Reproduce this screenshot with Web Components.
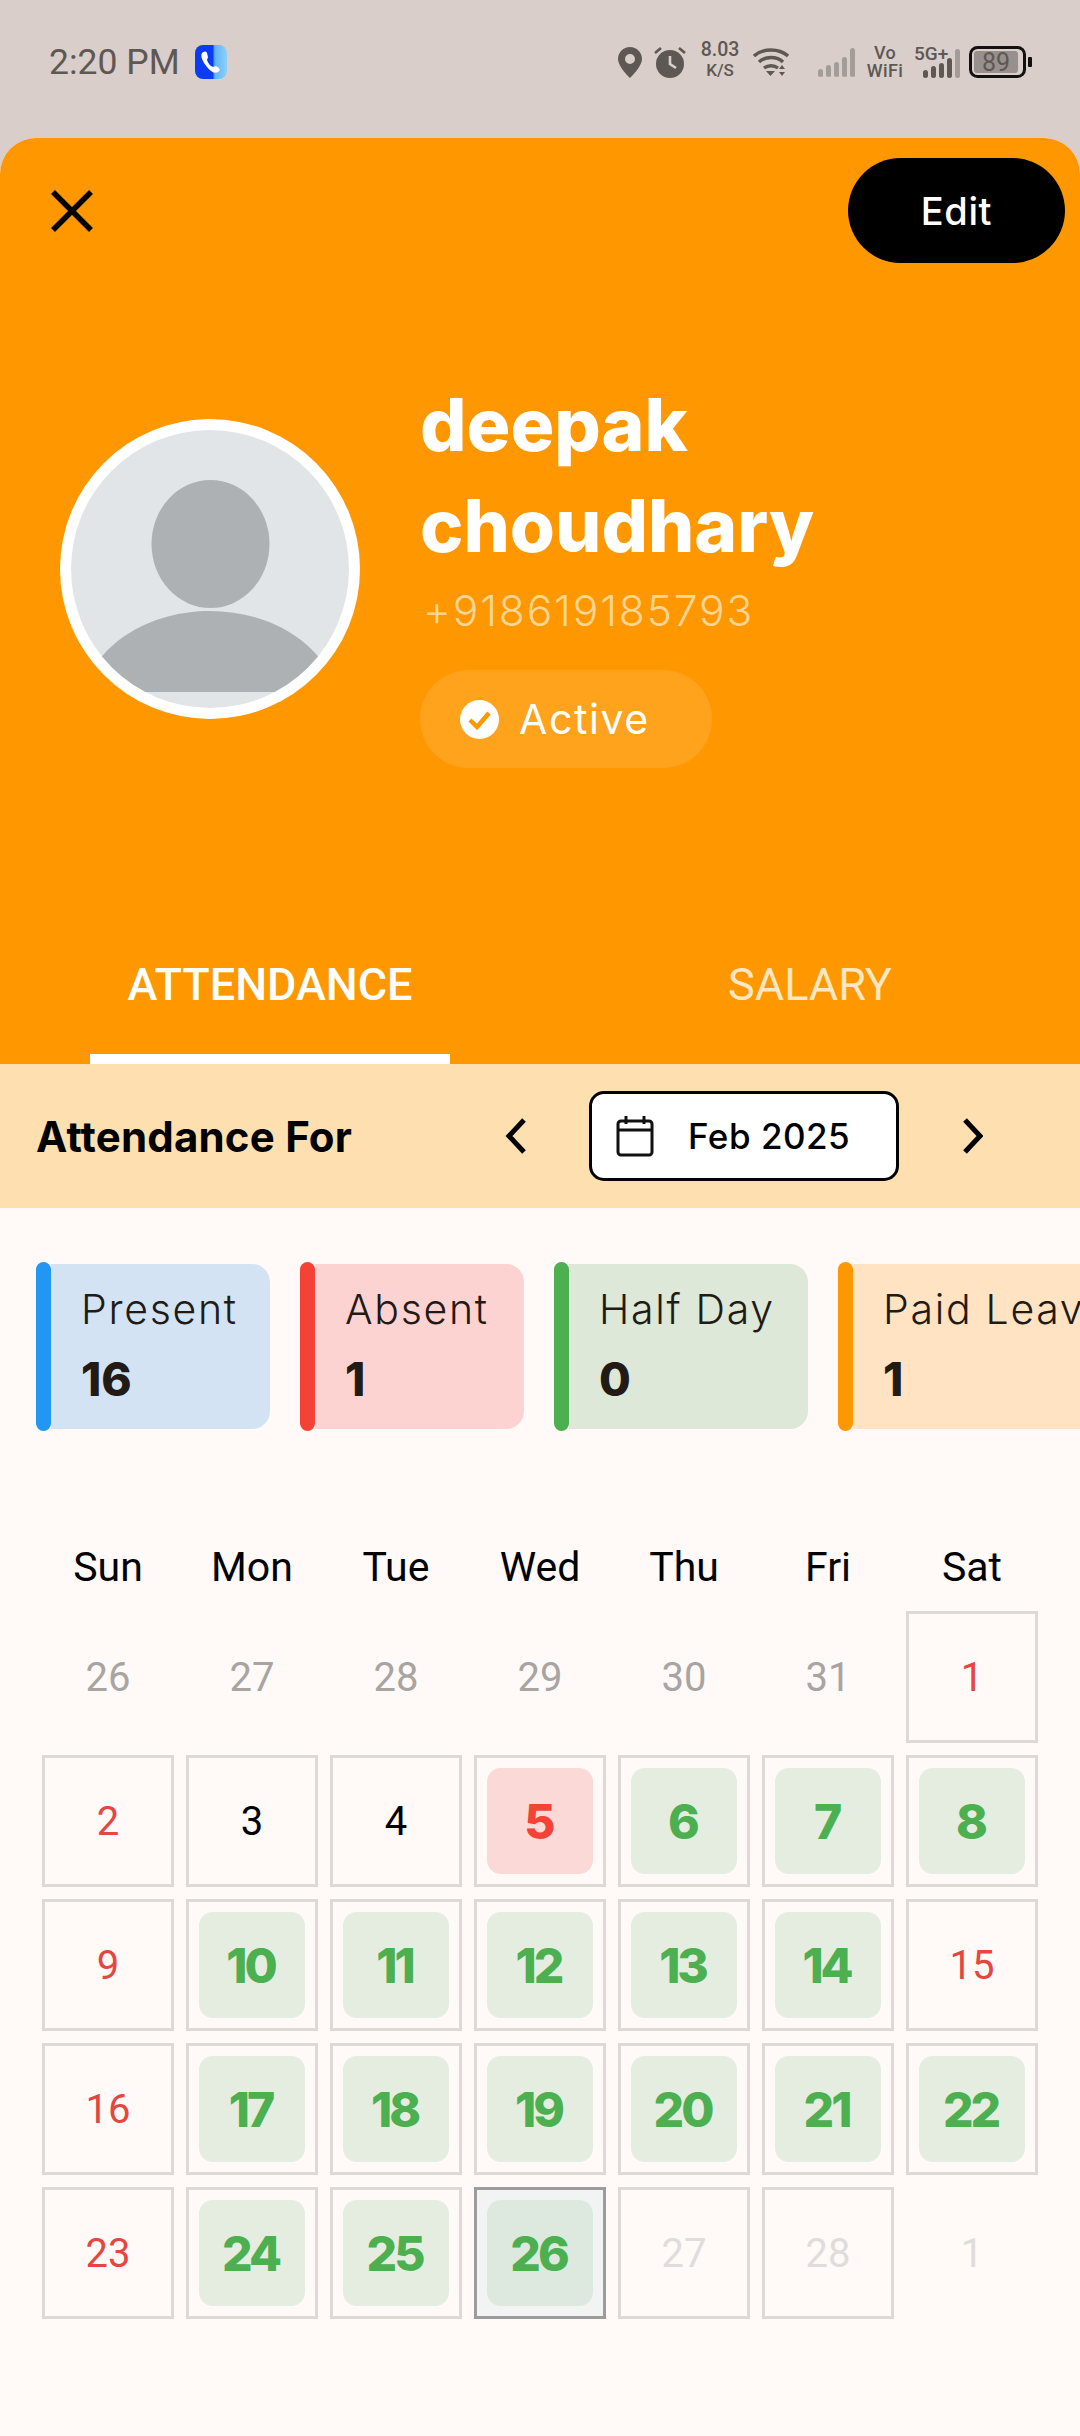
<!DOCTYPE html>
<html lang="en">
<head>
<meta charset="utf-8">
<title>Attendance</title>
<style>
  html, body { margin: 0; padding: 0; }
  body {
    width: 1080px;
    height: 2436px;
    overflow: hidden;
    background: #d9ceca;
    font-family: Roboto, "Liberation Sans", sans-serif;
  }
</style>
</head>
<body>
  <status-bar></status-bar>
  <profile-sheet>
    <profile-header name="deepak choudhary" phone="+918619185793" status="Active"></profile-header>
    <tab-bar></tab-bar>
    <month-bar month="Feb 2025"></month-bar>
    <stat-row>
      <stat-card color="blue" style="width:234px"><span slot="label">Present</span>16</stat-card>
      <stat-card color="red" style="width:224px"><span slot="label">Absent</span>1</stat-card>
      <stat-card color="green" style="width:254px"><span slot="label">Half Day</span>0</stat-card>
      <stat-card color="orange" style="width:300px"><span slot="label">Paid Leave</span>1</stat-card>
    </stat-row>
    <calendar-grid>
      <calendar-day kind="head">Sun</calendar-day><calendar-day kind="head">Mon</calendar-day><calendar-day kind="head">Tue</calendar-day><calendar-day kind="head">Wed</calendar-day><calendar-day kind="head">Thu</calendar-day><calendar-day kind="head">Fri</calendar-day><calendar-day kind="head">Sat</calendar-day>

      <calendar-day kind="muted">26</calendar-day><calendar-day kind="muted">27</calendar-day><calendar-day kind="muted">28</calendar-day><calendar-day kind="muted">29</calendar-day><calendar-day kind="muted">30</calendar-day><calendar-day kind="muted">31</calendar-day><calendar-day kind="off">1</calendar-day>

      <calendar-day kind="off">2</calendar-day><calendar-day>3</calendar-day><calendar-day>4</calendar-day><calendar-day kind="absent">5</calendar-day><calendar-day kind="present">6</calendar-day><calendar-day kind="present">7</calendar-day><calendar-day kind="present">8</calendar-day>

      <calendar-day kind="off">9</calendar-day><calendar-day kind="present">10</calendar-day><calendar-day kind="present">11</calendar-day><calendar-day kind="present">12</calendar-day><calendar-day kind="present">13</calendar-day><calendar-day kind="present">14</calendar-day><calendar-day kind="off">15</calendar-day>

      <calendar-day kind="off">16</calendar-day><calendar-day kind="present">17</calendar-day><calendar-day kind="present">18</calendar-day><calendar-day kind="present">19</calendar-day><calendar-day kind="present">20</calendar-day><calendar-day kind="present">21</calendar-day><calendar-day kind="present">22</calendar-day>

      <calendar-day kind="off">23</calendar-day><calendar-day kind="present">24</calendar-day><calendar-day kind="present">25</calendar-day><calendar-day kind="today">26</calendar-day><calendar-day kind="future">27</calendar-day><calendar-day kind="future">28</calendar-day><calendar-day kind="ghost">1</calendar-day>
    </calendar-grid>
  </profile-sheet>

<script>
class StatusBar extends HTMLElement {
  constructor() {
    super();
    this.attachShadow({ mode: "open" });
    this.shadowRoot.innerHTML = `
      <style>
        :host {
          display: flex;
          align-items: center;
          height: 124px;
          padding: 0 48px 14px 49px;
          color: #5e5855;
          font-family: Roboto, sans-serif;
        }
        svg { display: block; flex: none; }
        .time { font-size: 35.500px; }
        .app { margin-left: 15px; }
        .right { margin-left: auto; display: flex; align-items: center; }
        .speed, .vo { flex: none; display: flex; flex-direction: column; align-items: center; font-weight: 500; }
        .speed { margin: 0 0 4px 15px; width: 38px; font-size: 19.500px; line-height: 20px; }
        .speed small { font-size: 17px; line-height: 20px; }
        .wifi { margin-left: 14px; }
        .sig1 { margin-left: 29px; }
        .vo { margin-left: 13px; width: 34px; font-size: 18px; line-height: 18px; letter-spacing: .4px; }
        .net { flex: none; margin-left: 12px; position: relative; width: 46px; height: 32px; }
        .net span { position: absolute; left: 0; top: -1px; font-size: 19px; line-height: 18px; font-weight: 500; }
        .net svg { position: absolute; left: 9px; top: 3px; }
        .batt { margin-left: 9px; }
        .batt-text { font-size: 25px; fill: #5e5855; font-family: Roboto, sans-serif; }
      </style>
      <span class="time">2:20 PM</span>
      <svg class="app" width="32" height="34" viewBox="0 0 32 34">
        <defs><linearGradient id="g" x1="0" x2="1" y1="0" y2="0">
          <stop offset="0" stop-color="#0a3cf5"/><stop offset=".55" stop-color="#0a3cf5"/><stop offset=".62" stop-color="#5db4f7"/><stop offset="1" stop-color="#8fd0fb"/>
        </linearGradient></defs>
        <rect width="32" height="34" rx="8" fill="url(#g)"/>
        <path d="M7 8c2-2 4-2 5 0l1 4c0 1-1 2-1 3 1 3 3 6 6 7 1 0 2-1 3-1l3 2c1 1 1 3-1 4-3 2-7 0-11-5S5 11 7 8z" fill="#fff"/>
      </svg>
      <div class="right">
        <svg width="24" height="31" viewBox="0 0 24 31"><path fill="#5e5855" fill-rule="evenodd" d="M12 0C5.400 0 0 5.200 0 11.800 0 20 12 31 12 31s12-11 12-19.200C24 5.200 18.600 0 12 0zm0 7a5 5 0 1 1 0 10 5 5 0 0 1 0-10z"/></svg>
        <svg style="margin-left:12px" width="32" height="32" viewBox="0 0 32 32">
          <circle cx="16" cy="18" r="14" fill="#5e5855"/>
          <path d="M16 10v8l6 4" fill="none" stroke="#d9ceca" stroke-width="2.600"/>
          <path d="M1 7l6-5M31 7l-6-5" stroke="#5e5855" stroke-width="2.600" fill="none"/>
        </svg>
        <div class="speed"><span>8.03</span><small>K/S</small></div>
        <svg class="wifi" width="36" height="30" viewBox="0 0 36 30">
          <g fill="none" stroke="#5e5855" stroke-width="3.400">
            <path d="M1 9c9-8 25-8 34 0"/><path d="M6 15c6-6 18-6 24 0"/><path d="M11 21c4-3 10-3 14 0"/>
          </g>
          <path d="M13 24h9l-4.500 5zM26 22l3-4 3 4zM26 25h6l-3 4z" fill="#5e5855"/>
        </svg>
        <svg class="sig1" width="37" height="29" viewBox="0 0 37 29" fill="#a39c98">
          <rect x="0" y="21" width="5" height="8" rx="2.500"/><rect x="8" y="17" width="5" height="12" rx="2.500"/><rect x="16" y="14" width="5" height="15" rx="2.500"/><rect x="24" y="9" width="5" height="20" rx="2.500"/><rect x="32" y="0" width="5" height="29" rx="2.500"/>
        </svg>
        <div class="vo"><span>Vo</span><span>WiFi</span></div>
        <div class="net">
          <span>5G+</span>
          <svg width="37" height="29" viewBox="0 0 37 29">
            <g fill="#5e5855"><rect x="0" y="21" width="5" height="8" rx="2.500"/><rect x="8" y="17" width="5" height="12" rx="2.500"/><rect x="16" y="14" width="5" height="15" rx="2.500"/><rect x="24" y="9" width="5" height="20" rx="2.500"/></g>
            <rect x="32" y="0" width="5" height="29" rx="2.500" fill="#a39c98"/>
          </svg>
        </div>
        <svg class="batt" width="63" height="32" viewBox="0 0 63 32">
          <rect x="1.500" y="1.500" width="54" height="29" rx="7" fill="none" stroke="#111" stroke-width="3"/>
          <rect x="5" y="5" width="44" height="22" rx="3" fill="#97908c"/>
          <rect x="59" y="11" width="4" height="10" rx="1" fill="#111"/>
          <text class="batt-text" x="27" y="25" text-anchor="middle">89</text>
        </svg>
      </div>
    `;
  }
}

class ProfileSheet extends HTMLElement {
  constructor() {
    super();
    this.attachShadow({ mode: "open" });
    this.shadowRoot.innerHTML = `
      <style>
        :host {
          display: block;
          height: 2298px;
          background: #fff9f7;
          border-radius: 36px 36px 0 0;
          overflow: hidden;
        }
      </style>
      <slot></slot>
    `;
  }
}

class ProfileHeader extends HTMLElement {
  constructor() {
    super();
    this.attachShadow({ mode: "open" });
    const name = this.getAttribute("name").split(" ");
    this.shadowRoot.innerHTML = `
      <style>
        :host {
          display: block;
          box-sizing: border-box;
          height: 792px;
          background: #ff9800;
          color: #fff;
          font-family: Inter, sans-serif;
        }
        .top {
          display: flex;
          align-items: center;
          justify-content: space-between;
          padding: 20px 15px 0 51px;
        }
        .close { display: block; }
        .edit {
          width: 217px;
          height: 105px;
          border-radius: 53px;
          background: #000;
          display: flex;
          align-items: center;
          justify-content: center;
          font-size: 38px;
          font-weight: 500;
          letter-spacing: .6px;
        }
        .profile { display: flex; padding: 111px 0 0 60px; }
        .avatar { flex: none; margin-top: 45px; display: block; }
        .info { margin-left: 60px; }
        h1 {
          margin: 0;
          font-size: 73px;
          line-height: 101px;
          font-weight: 800;
        }
        h1 span { display: block; }
        .phone {
          margin: 6.500px 0 0 3px;
          font-size: 42.500px;
          line-height: 56px;
          font-weight: 300;
          letter-spacing: 1.900px;
          color: #ffd596;
        }
        .pill {
          margin-top: 31.500px;
          width: 292px;
          height: 98px;
          box-sizing: border-box;
          padding-left: 40px;
          border-radius: 49px;
          background: #ffa21c;
          display: flex;
          align-items: center;
          gap: 20px;
          font-size: 41px;
          letter-spacing: 1.600px;
        }
        .pill svg { display: block; flex: none; }
      </style>
      <div class="top">
        <svg class="close" width="42" height="42" viewBox="0 0 42 42"><path d="M2 2l38 38M40 2L2 40" stroke="#000" stroke-width="5.500" fill="none"/></svg>
        <div class="edit">Edit</div>
      </div>
      <div class="profile">
        <svg class="avatar" width="300" height="300" viewBox="0 0 300 300">
          <defs><clipPath id="c"><circle cx="150" cy="150" r="139"/></clipPath></defs>
          <circle cx="150" cy="150" r="150" fill="#fff"/>
          <circle cx="150" cy="150" r="139" fill="#e2e5e8"/>
          <g clip-path="url(#c)" fill="#aeb1b4">
            <ellipse cx="150.500" cy="125" rx="59" ry="64"/>
            <path d="M22 273C38 222 92 192 150 192s112 30 128 81H22z"/>
          </g>
        </svg>
        <div class="info">
          <h1><span>${name[0]}</span><span>${name[1]}</span></h1>
          <div class="phone">${this.getAttribute("phone")}</div>
          <div class="pill">
            <svg width="39" height="39" viewBox="0 0 39 39">
              <circle cx="19.500" cy="19.500" r="19.500" fill="#fff"/>
              <path d="M10 20l7 7 12-14" fill="none" stroke="#ff9800" stroke-width="4.500"/>
            </svg>
            <span>${this.getAttribute("status")}</span>
          </div>
        </div>
      </div>
    `;
  }
}

class TabBar extends HTMLElement {
  constructor() {
    super();
    this.attachShadow({ mode: "open" });
    this.shadowRoot.innerHTML = `
      <style>
        :host {
          display: grid;
          grid-template-columns: 1fr 1fr;
          height: 134px;
          background: #ff9800;
          color: #fff;
          font-family: Roboto, sans-serif;
          font-size: 45px;
        }
        div {
          position: relative;
          display: flex;
          align-items: flex-start;
          justify-content: center;
          padding-top: 30px;
          line-height: 50px;
          color: #ffe7c4;
        }
        .on { color: #fff; font-weight: 500; }
        .on::after {
          content: "";
          position: absolute;
          left: 90px;
          right: 90px;
          bottom: 0;
          height: 10px;
          background: #fff;
        }
      </style>
      <div class="on">ATTENDANCE</div>
      <div>SALARY</div>
    `;
  }
}

class MonthBar extends HTMLElement {
  constructor() {
    super();
    this.attachShadow({ mode: "open" });
    this.shadowRoot.innerHTML = `
      <style>
        :host {
          display: flex;
          align-items: center;
          height: 144px;
          box-sizing: border-box;
          padding: 0 97px 0 36px;
          background: #fddfb0;
          color: #000;
          font-family: Inter, sans-serif;
        }
        .title { font-size: 42px; font-weight: 700; letter-spacing: .2px; margin-right: auto; }
        svg { display: block; flex: none; }
        .date {
          margin: 0 63px 0 62px;
          width: 310px;
          height: 90px;
          box-sizing: border-box;
          border: 3px solid #000;
          border-radius: 15px;
          background: #fff;
          display: flex;
          align-items: center;
          padding-left: 24px;
          font-size: 35px;
          font-weight: 500;
          letter-spacing: .5px;
        }
        .date span { margin-left: 34px; }
      </style>
      <div class="title">Attendance For</div>
      <svg width="22" height="36" viewBox="0 0 22 36"><path d="M19 2L4 18l15 16" fill="none" stroke="#000" stroke-width="5"/></svg>
      <div class="date">
        <svg width="38" height="42" viewBox="0 0 38 42">
          <rect x="2" y="6" width="34" height="34" rx="3" fill="none" stroke="#111" stroke-width="3"/>
          <path d="M2 15h34M10 1v8M28 1v8" fill="none" stroke="#111" stroke-width="3"/>
        </svg>
        <span>${this.getAttribute("month")}</span>
      </div>
      <svg width="21" height="36" viewBox="0 0 21 36"><path d="M3 2l15 16L3 34" fill="none" stroke="#000" stroke-width="5"/></svg>
    `;
  }
}

class StatRow extends HTMLElement {
  constructor() {
    super();
    this.attachShadow({ mode: "open" });
    this.shadowRoot.innerHTML = `
      <style>
        :host {
          display: flex;
          gap: 30px;
          padding: 54px 0 0 36px;
          overflow: hidden;
        }
      </style>
      <slot></slot>
    `;
  }
}

const STAT_COLORS = {
  blue: ["#2196f3", "#d3e3f3"],
  red: ["#f44336", "#fdd3d1"],
  green: ["#4caf50", "#dde8d9"],
  orange: ["#ff9800", "#ffe3c2"],
};

class StatCard extends HTMLElement {
  constructor() {
    super();
    this.attachShadow({ mode: "open" });
    const [bar, bg] = STAT_COLORS[this.getAttribute("color")];
    this.shadowRoot.innerHTML = `
      <style>
        :host {
          display: flex;
          flex: none;
          height: 169px;
          color: #211a15;
          font-family: Inter, sans-serif;
        }
        .bar { flex: none; width: 15px; border-radius: 8px; background: ${bar}; }
        .body {
          flex: 1;
          margin: 2px 0;
          padding: 22px 0 0 30px;
          border-radius: 0 18px 18px 0;
          background: ${bg};
          white-space: nowrap;
        }
        .label { font-size: 41px; line-height: 46px; font-weight: 300; letter-spacing: 1.700px; }
        .num { margin-top: 19px; font-size: 46px; line-height: 56px; font-weight: 800; }
      </style>
      <div class="bar"></div>
      <div class="body">
        <div class="label"><slot name="label"></slot></div>
        <div class="num"><slot></slot></div>
      </div>
    `;
  }
}

class CalendarGrid extends HTMLElement {
  constructor() {
    super();
    this.attachShadow({ mode: "open" });
    this.shadowRoot.innerHTML = `
      <style>
        :host {
          display: grid;
          grid-template-columns: repeat(7, 132px);
          grid-template-rows: 65px repeat(5, 132px);
          gap: 12px;
          padding: 103px 0 0 42px;
        }
      </style>
      <slot></slot>
    `;
  }
}

class CalendarDay extends HTMLElement {
  constructor() {
    super();
    this.attachShadow({ mode: "open" });
    this.shadowRoot.innerHTML = `
      <style>
        :host {
          display: flex;
          box-sizing: border-box;
          padding: 10px;
          border: 3px solid #e0d7d7;
          color: #000;
          font-family: Roboto, sans-serif;
          font-size: 40px;
        }
        .num {
          flex: 1;
          display: flex;
          align-items: center;
          justify-content: center;
          border-radius: 14px;
        }
        :host([kind="head"]), :host([kind="muted"]), :host([kind="ghost"]) { border-color: transparent; }
        :host([kind="head"]) { font-size: 41px; }
        :host([kind="muted"]) { color: #a8a4a2; }
        :host([kind="off"]) { color: #e5463f; }
        :host([kind="future"]), :host([kind="ghost"]) { color: #e1dcdc; }
        :host([kind="present"]), :host([kind="today"]), :host([kind="absent"]) {
          font-family: Inter, sans-serif;
          font-size: 48px;
          font-weight: 800;
          letter-spacing: -3px;
        }
        :host([kind="present"]) .num, :host([kind="today"]) .num, :host([kind="absent"]) .num { padding-right: 3px; }
        :host([kind="present"]) { color: #4caf50; }
        :host([kind="present"]) .num { background: #e5ede0; }
        :host([kind="absent"]) { color: #f44336; }
        :host([kind="absent"]) .num { background: #fbd9d7; }
        :host([kind="today"]) { color: #4caf50; border-color: #9c9c9c; background: #f2f4f3; }
        :host([kind="today"]) .num { background: #dde9df; }
      </style>
      <div class="num"><slot></slot></div>
    `;
  }
}

customElements.define("status-bar", StatusBar);
customElements.define("profile-sheet", ProfileSheet);
customElements.define("profile-header", ProfileHeader);
customElements.define("tab-bar", TabBar);
customElements.define("month-bar", MonthBar);
customElements.define("stat-row", StatRow);
customElements.define("stat-card", StatCard);
customElements.define("calendar-grid", CalendarGrid);
customElements.define("calendar-day", CalendarDay);
</script>
</body>
</html>
